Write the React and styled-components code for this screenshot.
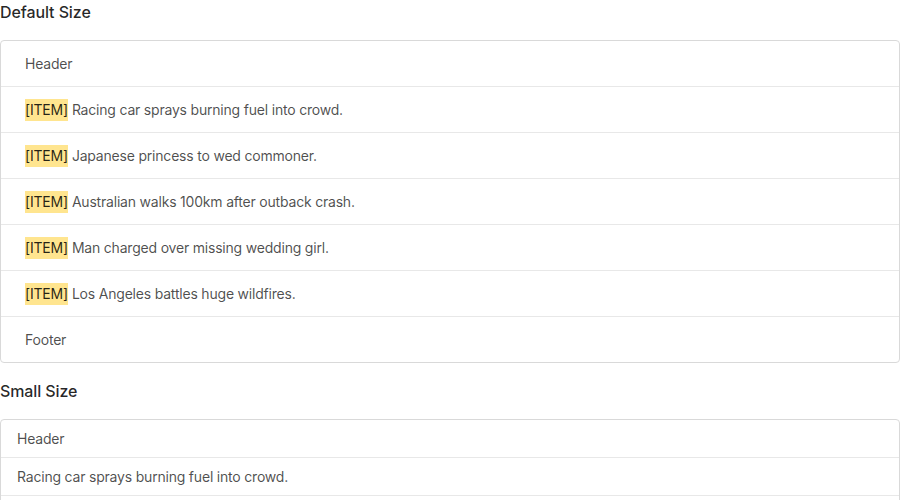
import React from 'react';
import styled, { createGlobalStyle } from 'styled-components';

const GlobalStyle = createGlobalStyle`
  body {
    margin: 0;
    background: #fff;
    font-family: Inter, "Noto Sans", "Liberation Sans", sans-serif;
    -webkit-font-smoothing: antialiased;
  }
`;

const Page = styled.div`
  width: 900px;
`;

const Title = styled.h3`
  margin: ${p => (p.first ? '0' : '16px')} 0 16px;
  font-size: 16px;
  line-height: 24px;
  font-weight: 500;
  letter-spacing: -0.1px;
  color: rgba(0, 0, 0, 0.85);
`;

const List = styled.div`
  border: 1px solid #d9d9d9;
  border-radius: 4px;
`;

const Row = styled.div`
  display: flex;
  align-items: center;
  box-sizing: border-box;
  height: ${p => (p.small ? 38 : 46)}px;
  padding: 0 ${p => (p.small ? 16 : 24)}px;
  border-bottom: 1px solid #e8e8e8;
  font-size: 14px;
  line-height: 22px;
  letter-spacing: -0.2px;
  color: rgba(0, 0, 0, 0.7);

  &:last-child {
    border-bottom: none;
    height: ${p => (p.small ? 37 : 45)}px;
  }
`;

const Mark = styled.mark`
  background: #ffe58f;
  color: rgba(0, 0, 0, 0.85);
  padding: 0;
  margin-right: 4px;
`;

const data = [
  'Racing car sprays burning fuel into crowd.',
  'Japanese princess to wed commoner.',
  'Australian walks 100km after outback crash.',
  'Man charged over missing wedding girl.',
  'Los Angeles battles huge wildfires.',
];

export default function App() {
  return (
    <Page>
      <GlobalStyle />
      <Title first>Default Size</Title>
      <List>
        <Row>Header</Row>
        {data.map(item => (
          <Row key={item}>
            <Mark>[ITEM]</Mark>
            {item}
          </Row>
        ))}
        <Row>Footer</Row>
      </List>
      <Title>Small Size</Title>
      <List>
        <Row small>Header</Row>
        {data.map(item => (
          <Row small key={item}>
            {item}
          </Row>
        ))}
        <Row small>Footer</Row>
      </List>
    </Page>
  );
}
